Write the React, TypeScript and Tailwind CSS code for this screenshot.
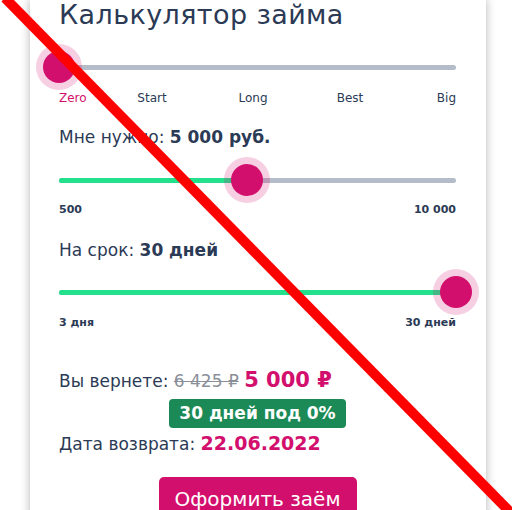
import React from "react";

const FONT = { fontFamily: '"DejaVu Sans", "Open Sans", sans-serif' };

function Slider({ pct, filled }: { pct: number; filled: boolean }) {
  return (
    <div className="relative h-[46px] w-full">
      <div className="absolute left-0 right-0 top-[20.5px] h-[5px] rounded-full bg-[#b5bcc9]" />
      {filled && (
        <div
          className="absolute left-0 top-[20.5px] h-[5px] rounded-full bg-[#22e08b]"
          style={{ width: `${pct}%` }}
        />
      )}
      <div
        className="absolute top-0 h-[46px] w-[46px] -translate-x-1/2 rounded-full bg-[rgba(212,15,108,0.2)] flex items-center justify-center"
        style={{ left: `${pct}%` }}
      >
        <div className="h-[32px] w-[32px] rounded-full bg-[#d30f6d]" />
      </div>
    </div>
  );
}

export default function App() {
  return (
    <div className="relative h-[510px] w-[512px] overflow-hidden bg-white" style={FONT}>
      <div className="ml-[30px] h-[560px] w-[456px] bg-white pl-[29px] pr-[30px] shadow-[0_0_9px_rgba(0,0,0,0.3)] text-[#2b3a55]">
        <div className="-mt-[1px] text-[27px] leading-[32px] tracking-[0.4px]">Калькулятор займа</div>

        <div className="mt-[13px]">
          <Slider pct={0} filled={false} />
        </div>
        <div className="relative h-[16px] text-[12px] leading-[16px]">
          <span className="absolute left-0 text-[#d30f6d]">Zero</span>
          <span className="absolute left-[93px] -translate-x-1/2">Start</span>
          <span className="absolute left-[194px] -translate-x-1/2">Long</span>
          <span className="absolute left-[291px] -translate-x-1/2">Best</span>
          <span className="absolute right-0">Big</span>
        </div>

        <div className="mt-[19px] text-[17px] leading-[24px]">
          Мне нужно: <span className="font-bold">5 000 руб.</span>
        </div>
        <div className="mt-[8px]">
          <Slider pct={47.37} filled={true} />
        </div>
        <div className="-mt-[1px] flex justify-between text-[11px] font-bold leading-[16px]">
          <span>500</span>
          <span>10 000</span>
        </div>

        <div className="mt-[20px] text-[17px] leading-[24px]">
          На срок: <span className="font-bold">30 дней</span>
        </div>
        <div className="mt-[7px]">
          <Slider pct={100} filled={true} />
        </div>
        <div className="flex justify-between text-[11px] font-bold leading-[16px]">
          <span>3 дня</span>
          <span>30 дней</span>
        </div>

        <div className="mt-[35px] text-[17px] leading-[28px]">
          Вы вернете: <span className="text-[#8a8f99] line-through">6 425 ₽</span>{" "}
          <span className="text-[21px] font-bold text-[#d30f6d]">5 000 ₽</span>
        </div>
        <div className="mt-[4px] flex justify-center">
          <div className="flex h-[29px] items-center rounded-[4px] bg-[#1b8a56] px-[10px] text-[17px] font-bold text-white">
            30 дней под 0%
          </div>
        </div>
        <div className="mt-[1px] text-[17px] leading-[28px]">
          Дата возврата: <span className="text-[19px] font-bold text-[#d30f6d]">22.06.2022</span>
        </div>
        <div className="mt-[19px] flex justify-center">
          <div className="flex h-[44px] w-[198px] items-center justify-center rounded-[5px] bg-[#d30f6d] text-[20px] text-white">
            Оформить заём
          </div>
        </div>
      </div>

      <svg className="pointer-events-none absolute left-0 top-0" width="512" height="510" viewBox="0 0 512 510">
        <line x1="5" y1="-2" x2="512" y2="514" stroke="#ff0000" strokeWidth="10" />
      </svg>
    </div>
  );
}
